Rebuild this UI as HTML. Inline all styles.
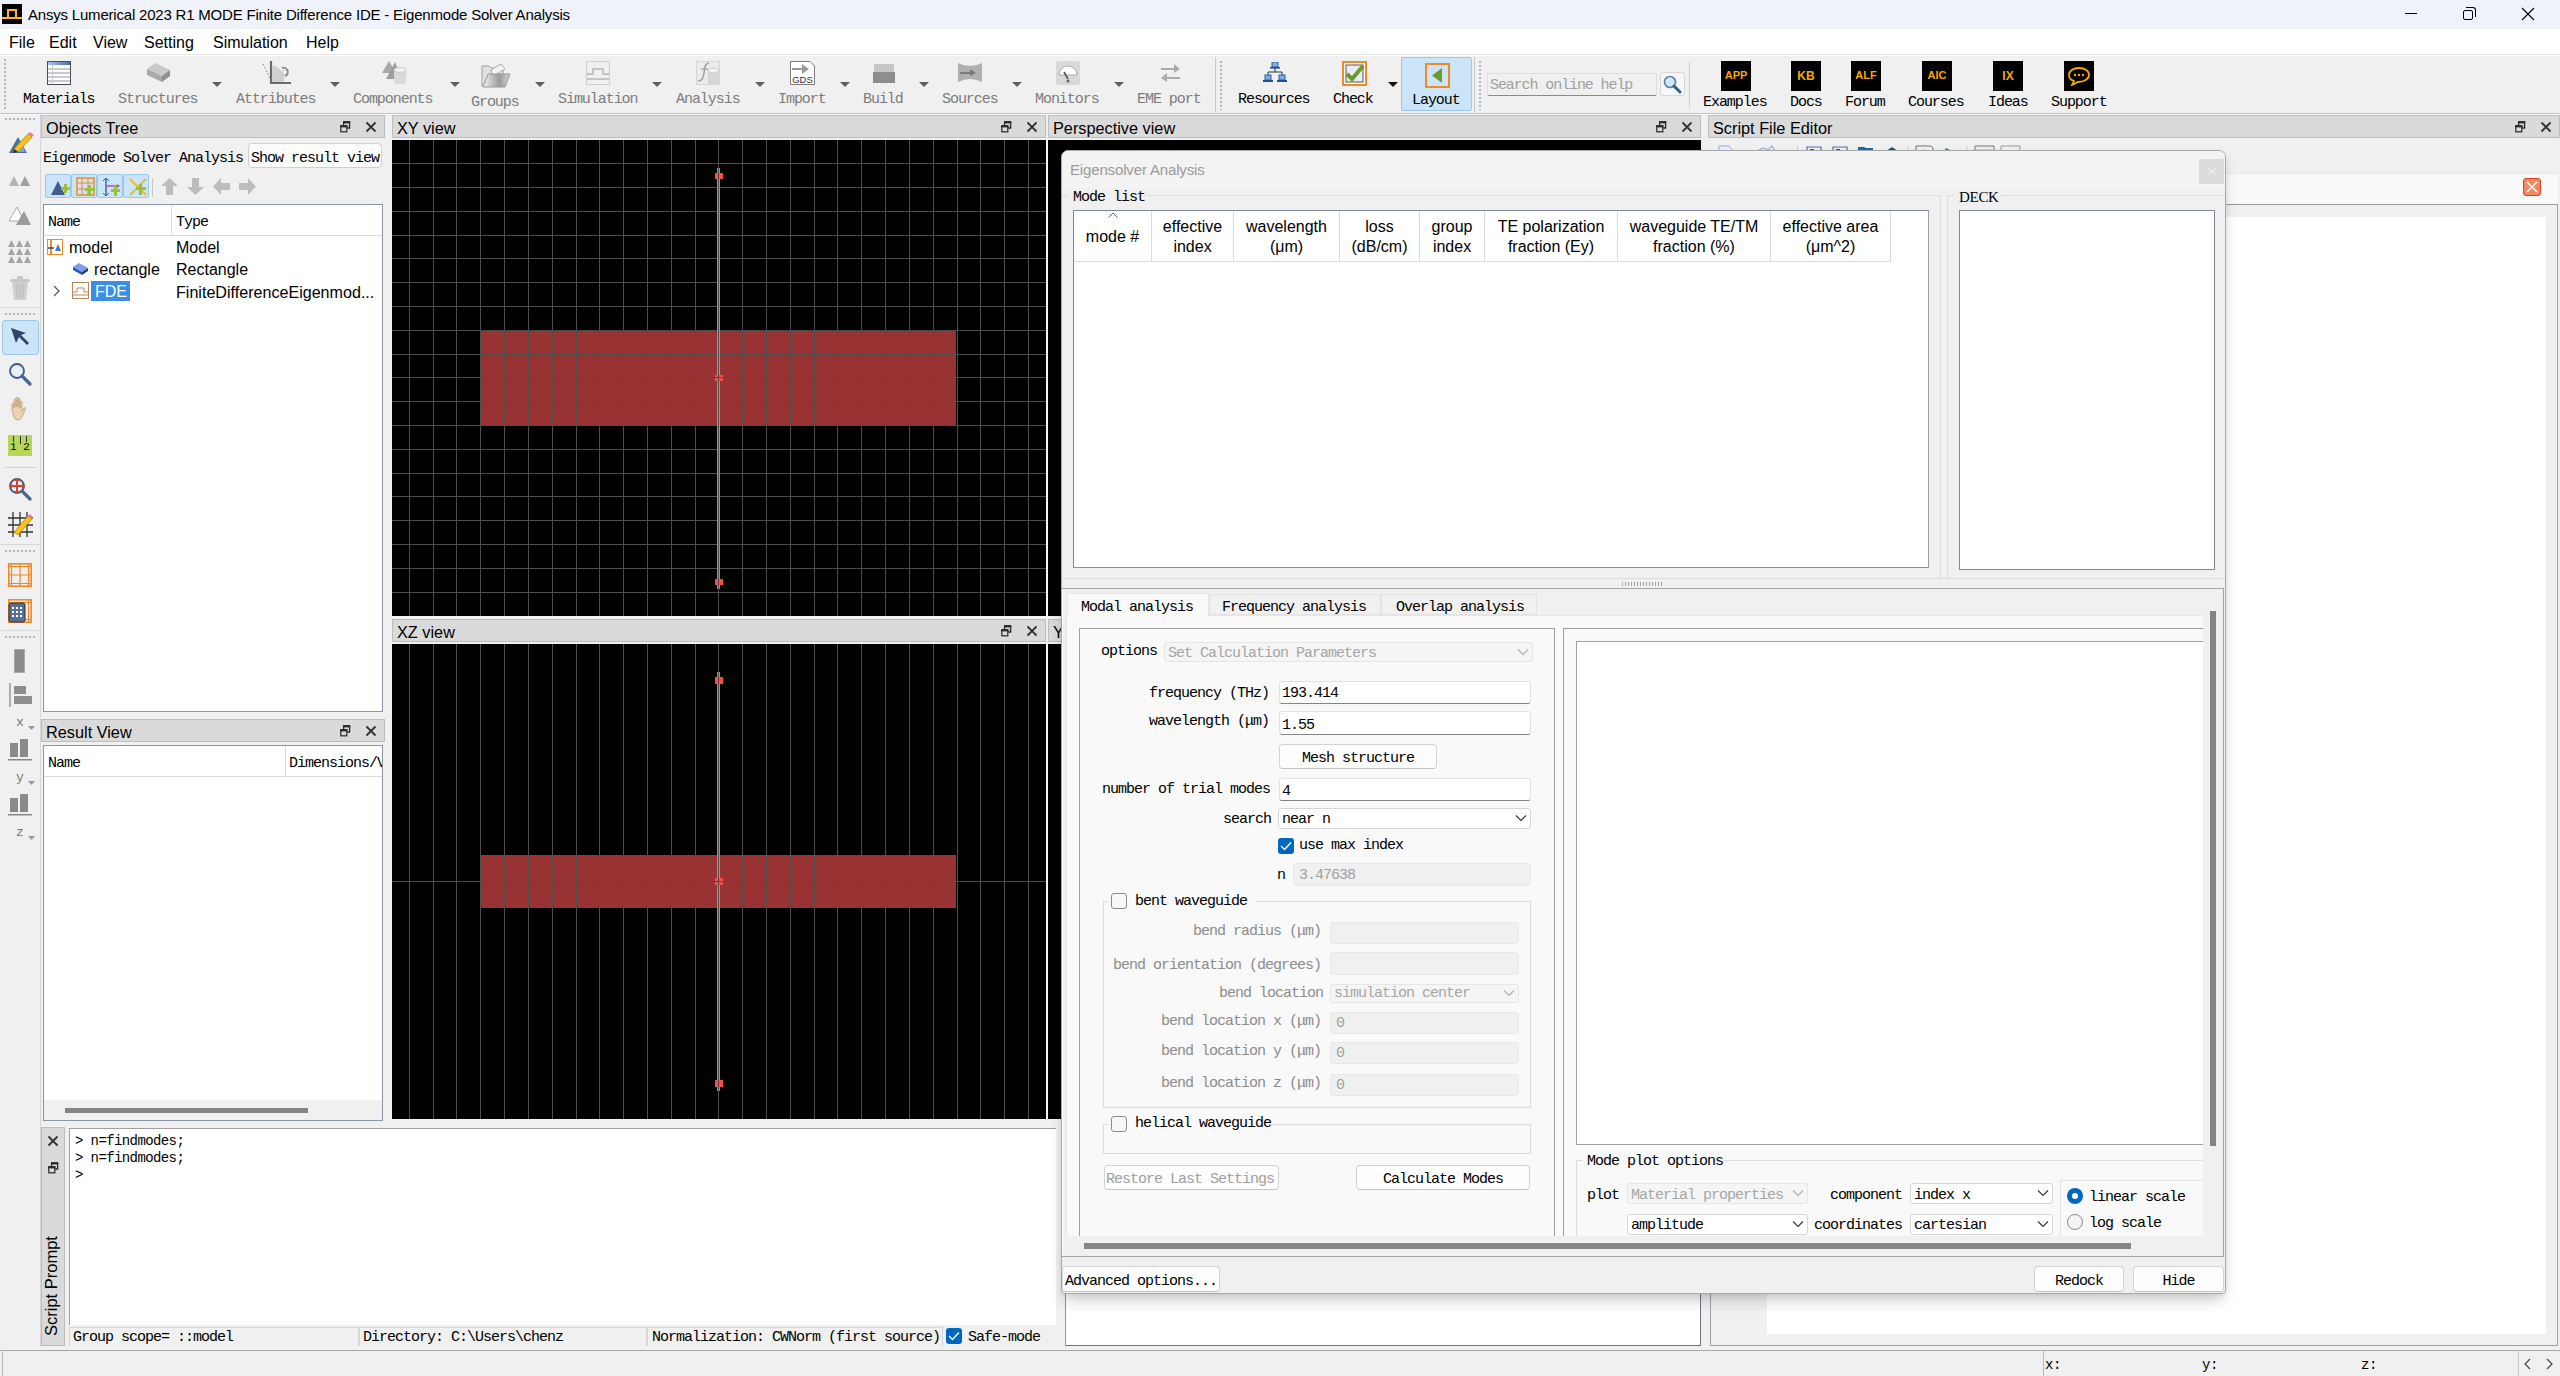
<!DOCTYPE html>
<html><head><meta charset="utf-8"><style>
*{box-sizing:border-box;margin:0;padding:0}
html,body{width:2560px;height:1376px;overflow:hidden;background:#f0f0f0;font-family:"Liberation Sans",sans-serif;color:#000}
.a{position:absolute}
.ss{font-family:"Liberation Mono",monospace;font-size:15px;letter-spacing:-1px;white-space:pre;line-height:1}
.sn{font-family:"Liberation Sans",sans-serif;white-space:pre;line-height:1}
.tbt{font-family:"Liberation Mono",monospace;font-size:15px;letter-spacing:-1.05px;white-space:pre;line-height:1;color:#7c7c7c}
.blk{color:#000}
</style></head><body>
<div class="a" style="left:0px;top:0px;width:2560px;height:29px;background:#eff3f9"></div>
<div class="a" style="left:2px;top:4px;width:20px;height:20px;background:#000"><div class="a" style="left:0;top:13px;width:20px;height:2px;background:#fbb718"></div><div class="a" style="left:5px;top:5px;width:10px;height:9px;border:2px solid #fbb718;border-bottom:none"></div></div>
<div class="a sn" style="left:28px;top:7px;font-size:15px;letter-spacing:-0.2px">Ansys Lumerical 2023 R1 MODE Finite Difference IDE - Eigenmode Solver Analysis</div>
<div class="a" style="left:2405px;top:13px;width:12px;height:1px;background:#000"></div>
<div class="a" style="left:2463px;top:10px;width:10px;height:10px;border:1px solid #000;border-radius:2px"></div>
<div class="a" style="left:2466px;top:7px;width:10px;height:10px;border-top:1px solid #000;border-right:1px solid #000;border-radius:0 3px 0 0"></div>
<svg class="a" style="left:2520px;top:6px;" width="16" height="16" viewBox="0 0 16 16"><path d="M2 2L14 14M14 2L2 14" stroke="#000" stroke-width="1.1"/></svg>
<div class="a" style="left:0px;top:29px;width:2560px;height:25px;background:#fff"></div>
<div class="a" style="left:0px;top:54px;width:2560px;height:1px;background:#e6e6e6"></div>
<div class="a" style="left:0px;top:55px;width:2560px;height:1px;background:#fff"></div>
<div class="a sn" style="left:9px;top:35px;font-size:16px">File</div>
<div class="a sn" style="left:49px;top:35px;font-size:16px">Edit</div>
<div class="a sn" style="left:93px;top:35px;font-size:16px">View</div>
<div class="a sn" style="left:144px;top:35px;font-size:16px">Setting</div>
<div class="a sn" style="left:213px;top:35px;font-size:16px">Simulation</div>
<div class="a sn" style="left:306px;top:35px;font-size:16px">Help</div>
<div class="a" style="left:0px;top:113px;width:2560px;height:1px;background:#c4c4c4"></div>
<div class="a" style="left:0px;top:114px;width:2560px;height:1px;background:#fafafa"></div>
<div class="a" style="left:4px;top:59px;width:2px;height:51px;background:repeating-linear-gradient(#b8b8b8 0 2px,transparent 2px 4px)"></div>
<div class="a" style="left:1401px;top:57px;width:71px;height:54px;background:#cce4f7;border:1px solid #99c9ef;border-radius:2px"></div>
<div class="a tbt blk" style="left:23px;top:92px;">Materials</div>
<div class="a tbt" style="left:118px;top:92px;">Structures</div>
<div class="a tbt" style="left:236px;top:92px;">Attributes</div>
<div class="a tbt" style="left:353px;top:92px;">Components</div>
<div class="a tbt" style="left:471px;top:95px;">Groups</div>
<div class="a tbt" style="left:558px;top:92px;">Simulation</div>
<div class="a tbt" style="left:676px;top:92px;">Analysis</div>
<div class="a tbt" style="left:778px;top:92px;">Import</div>
<div class="a tbt" style="left:863px;top:92px;">Build</div>
<div class="a tbt" style="left:942px;top:92px;">Sources</div>
<div class="a tbt" style="left:1035px;top:92px;">Monitors</div>
<div class="a tbt" style="left:1137px;top:92px;">EME port</div>
<div class="a tbt blk" style="left:1238px;top:92px;">Resources</div>
<div class="a tbt blk" style="left:1333px;top:92px;">Check</div>
<div class="a tbt blk" style="left:1412px;top:93px;">Layout</div>
<div class="a tbt blk" style="left:1703px;top:95px;">Examples</div>
<div class="a tbt blk" style="left:1790px;top:95px;">Docs</div>
<div class="a tbt blk" style="left:1845px;top:95px;">Forum</div>
<div class="a tbt blk" style="left:1908px;top:95px;">Courses</div>
<div class="a tbt blk" style="left:1988px;top:95px;">Ideas</div>
<div class="a tbt blk" style="left:2051px;top:95px;">Support</div>
<svg class="a" style="left:212px;top:82px;" width="10" height="6" viewBox="0 0 10 6"><path d="M0 0H10L5 5Z" fill="#5f5f5f"/></svg>
<svg class="a" style="left:330px;top:82px;" width="10" height="6" viewBox="0 0 10 6"><path d="M0 0H10L5 5Z" fill="#5f5f5f"/></svg>
<svg class="a" style="left:450px;top:82px;" width="10" height="6" viewBox="0 0 10 6"><path d="M0 0H10L5 5Z" fill="#5f5f5f"/></svg>
<svg class="a" style="left:535px;top:82px;" width="10" height="6" viewBox="0 0 10 6"><path d="M0 0H10L5 5Z" fill="#5f5f5f"/></svg>
<svg class="a" style="left:652px;top:82px;" width="10" height="6" viewBox="0 0 10 6"><path d="M0 0H10L5 5Z" fill="#5f5f5f"/></svg>
<svg class="a" style="left:755px;top:82px;" width="10" height="6" viewBox="0 0 10 6"><path d="M0 0H10L5 5Z" fill="#5f5f5f"/></svg>
<svg class="a" style="left:840px;top:82px;" width="10" height="6" viewBox="0 0 10 6"><path d="M0 0H10L5 5Z" fill="#5f5f5f"/></svg>
<svg class="a" style="left:919px;top:82px;" width="10" height="6" viewBox="0 0 10 6"><path d="M0 0H10L5 5Z" fill="#5f5f5f"/></svg>
<svg class="a" style="left:1012px;top:82px;" width="10" height="6" viewBox="0 0 10 6"><path d="M0 0H10L5 5Z" fill="#5f5f5f"/></svg>
<svg class="a" style="left:1114px;top:82px;" width="10" height="6" viewBox="0 0 10 6"><path d="M0 0H10L5 5Z" fill="#5f5f5f"/></svg>
<svg class="a" style="left:1388px;top:82px;" width="10" height="6" viewBox="0 0 10 6"><path d="M0 0H10L5 5Z" fill="#111"/></svg>
<div class="a" style="left:1215px;top:57px;width:1px;height:55px;background:#c8c8c8"></div>
<div class="a" style="left:1220px;top:61px;width:2px;height:49px;background:repeating-linear-gradient(#b8b8b8 0 2px,transparent 2px 4px)"></div>
<div class="a" style="left:1474px;top:57px;width:1px;height:55px;background:#c8c8c8"></div>
<div class="a" style="left:1479px;top:61px;width:2px;height:49px;background:repeating-linear-gradient(#b8b8b8 0 2px,transparent 2px 4px)"></div>
<div class="a" style="left:1689px;top:62px;width:1px;height:46px;background:#d0d0d0"></div>
<div class="a" style="left:1487px;top:73px;width:170px;height:23px;background:#f0f0f0;border:1px solid #dedede;border-bottom:1px solid #8a8a8a;border-radius:2px"></div>
<div class="a ss" style="left:1490px;top:78px;color:#a0a0a0;letter-spacing:-1.1px">Search online help</div>
<div class="a" style="left:1660px;top:72px;width:25px;height:24px;background:#f7f7f7;border:1px solid #d6d6d6;border-radius:3px"></div>
<svg class="a" style="left:1662px;top:74px;" width="22" height="20" viewBox="0 0 22 20"><circle cx="8" cy="8" r="5.5" fill="#cfe6fb" stroke="#5a7fa8" stroke-width="1.6"/><path d="M12 12L18 18" stroke="#3c5d86" stroke-width="3" stroke-linecap="round"/></svg>
<div class="a" style="left:47px;top:61px;width:24px;height:24px;background:#fff;border:1px solid #4d4d5a"><div class="a" style="left:0;top:0;width:22px;height:3px;background:linear-gradient(90deg,#a9c8f4,#4a6aa8)"></div><div class="a" style="left:0;top:6px;width:22px;height:2px;background:#c9c9cf"></div><div class="a" style="left:0;top:10px;width:22px;height:2px;background:#c9c9cf"></div><div class="a" style="left:0;top:14px;width:22px;height:2px;background:#c9c9cf"></div><div class="a" style="left:0;top:18px;width:22px;height:2px;background:#c9c9cf"></div><div class="a" style="left:4px;top:3px;width:1px;height:19px;background:#c9c9cf"></div></div>
<svg class="a" style="left:146px;top:61px;" width="26" height="22" viewBox="0 0 26 22"><path d="M1 8L9 2L24 9L16 15Z" fill="#c9c9c9"/><path d="M1 8L16 15L16 21L1 14Z" fill="#a9a9a9"/><path d="M16 15L24 9L24 15L16 21Z" fill="#8f8f8f"/></svg>
<svg class="a" style="left:262px;top:60px;" width="30" height="25" viewBox="0 0 30 25"><path d="M9 1V23H29" stroke="#6a6a6a" stroke-width="2.2" fill="none"/><path d="M1 4L10 22" stroke="#777" stroke-dasharray="1.5 2" stroke-width="1"/><path d="M11 20L22 10" stroke="#777" stroke-dasharray="1.5 2"/><path d="M10 6L14 6L22 13L22 22L10 22Z" fill="#d0d0d0"/><path d="M20 8a4 4 0 1 1 3 8" stroke="#888" stroke-width="2" fill="none"/></svg>
<svg class="a" style="left:382px;top:61px;" width="26" height="24" viewBox="0 0 26 24"><path d="M0 12L7 0L14 12Z" fill="#a8a8a8"/><path d="M4 18L13 1L20 18Z" fill="#9e9e9e"/><rect x="12" y="8" width="12" height="15" rx="3" fill="#dadada"/><ellipse cx="18" cy="9" rx="6" ry="2.5" fill="#f0f0f0" stroke="#ccc"/></svg>
<svg class="a" style="left:481px;top:63px;" width="30" height="26" viewBox="0 0 30 26"><path d="M1 3H8L10 5H22V23H1Z" fill="#e0e0e0" stroke="#a0a0a0"/><path d="M10 7L20 1L24 6L12 13Z" fill="#f6f6f6" stroke="#aaa"/><path d="M2 24L7 11H29L24 24Z" fill="url(#gf)" stroke="#999"/><defs><linearGradient id="gf" x1="0" x2="1"><stop offset="0" stop-color="#f4f4f4"/><stop offset="0.6" stop-color="#9a9a9a"/><stop offset="1" stop-color="#d8d8d8"/></linearGradient></defs></svg>
<svg class="a" style="left:586px;top:61px;" width="25" height="24" viewBox="0 0 25 24"><rect x="0.5" y="0.5" width="23" height="23" fill="none" stroke="#cfcfcf"/><path d="M1 13H7V8H17V13H23" stroke="#c4c4c4" stroke-width="2" fill="none"/><path d="M1 18H23" stroke="#c4c4c4" stroke-width="2"/></svg>
<svg class="a" style="left:696px;top:61px;" width="24" height="24" viewBox="0 0 24 24"><rect x="0.5" y="0.5" width="23" height="23" fill="#ebebeb" stroke="#d5d5d5"/><path d="M13 2C9 2 9 6 8 12S6 20 2 20" stroke="#a0a0a0" stroke-width="1.5" fill="none"/><path d="M5 8H12" stroke="#a0a0a0" stroke-width="1.3"/><rect x="12" y="9" width="11" height="14" fill="#d6d6d6"/><ellipse cx="17.5" cy="9.5" rx="5.5" ry="2.3" fill="#f3f3f3" stroke="#ccc"/></svg>
<svg class="a" style="left:790px;top:61px;" width="25" height="24" viewBox="0 0 25 24"><path d="M0.5 0.5H20L24.5 5V23.5H0.5Z" fill="#fff" stroke="#7b7b7b"/><path d="M2 7H12V3L19 8L12 13V9H2Z" fill="#9a9a9a"/><text x="12.5" y="21.5" text-anchor="middle" font-family="Liberation Sans" font-size="9.5" fill="#333">GDS</text></svg>
<svg class="a" style="left:873px;top:64px;" width="23" height="20" viewBox="0 0 23 20"><rect x="1" y="0" width="20" height="8" fill="#c6c6c6"/><rect x="0" y="8" width="22" height="11" fill="#8e8e8e"/></svg>
<svg class="a" style="left:958px;top:63px;" width="25" height="19" viewBox="0 0 25 19"><path d="M0 0Q12 6 24 0V19Q12 13 0 19Z" fill="#b0b0b0"/><path d="M2 9H12V6L18 10L12 13V11H2Z" fill="#7a7a7a"/></svg>
<svg class="a" style="left:1056px;top:61px;" width="24" height="24" viewBox="0 0 24 24"><rect x="0" y="0" width="24" height="24" rx="3" fill="#d8d8d8"/><path d="M3 14A9 9 0 0 1 21 14Z" fill="#fff" stroke="#aaa"/><path d="M8 11L12 18" stroke="#555" stroke-width="1.6"/><circle cx="12" cy="20" r="1.5" fill="#666"/></svg>
<svg class="a" style="left:1160px;top:63px;" width="21" height="20" viewBox="0 0 21 20"><path d="M1 5H14V1L20 6L14 10V7H1Z" fill="#ababab"/><path d="M20 14H7V10L1 15L7 19V16H20Z" fill="#ababab"/></svg>
<svg class="a" style="left:1263px;top:62px;" width="24" height="21" viewBox="0 0 24 21"><rect x="9" y="0" width="6" height="5" fill="#7ab0e6" stroke="#2a5ea8"/><rect x="7" y="5" width="10" height="1.6" fill="#1d4f9a"/><path d="M12 6V10M5 10H19M5 10V13M19 10V13" stroke="#333" stroke-width="1"/><rect x="2" y="13" width="6" height="5" fill="#7ab0e6" stroke="#2a5ea8"/><rect x="16" y="13" width="6" height="5" fill="#7ab0e6" stroke="#2a5ea8"/><rect x="0" y="18" width="10" height="2" fill="#1d4f9a"/><rect x="14" y="18" width="10" height="2" fill="#1d4f9a"/></svg>
<svg class="a" style="left:1342px;top:61px;" width="25" height="25" viewBox="0 0 25 25"><rect x="1" y="1" width="23" height="23" fill="#fff" stroke="#f08a24" stroke-width="2"/><rect x="4" y="4" width="17" height="17" fill="#e8ecf4" stroke="#555"/><path d="M5 13L10 18L21 5" stroke="#6f9a2e" stroke-width="4" fill="none"/></svg>
<svg class="a" style="left:1425px;top:63px;" width="25" height="25" viewBox="0 0 25 25"><rect x="1" y="1" width="23" height="23" fill="none" stroke="#f08a24" stroke-width="2"/><path d="M17 5V20L7 12.5Z" fill="#6f9a2e"/></svg>
<div class="a" style="left:1721px;top:61px;width:30px;height:30px;background:#000"><div class="a sn" style="left:0;top:9px;width:30px;text-align:center;font-size:11px;font-weight:bold;color:#f6a800">APP</div></div>
<div class="a" style="left:1791px;top:61px;width:30px;height:30px;background:#000"><div class="a sn" style="left:0;top:9px;width:30px;text-align:center;font-size:12px;font-weight:bold;color:#f6a800">KB</div></div>
<div class="a" style="left:1851px;top:61px;width:30px;height:30px;background:#000"><div class="a sn" style="left:0;top:9px;width:30px;text-align:center;font-size:11px;font-weight:bold;color:#f6a800">ALF</div></div>
<div class="a" style="left:1922px;top:61px;width:30px;height:30px;background:#000"><div class="a sn" style="left:0;top:9px;width:30px;text-align:center;font-size:11px;font-weight:bold;color:#f6a800">AIC</div></div>
<div class="a" style="left:1993px;top:61px;width:30px;height:30px;background:#000"><div class="a sn" style="left:0;top:9px;width:30px;text-align:center;font-size:12px;font-weight:bold;color:#f6a800">IX</div></div>
<div class="a" style="left:2064px;top:61px;width:30px;height:30px;background:#000"><svg class="a" style="left:3px;top:5px" width="24" height="20"><path d="M12 2C6 2 2 5 2 9C2 12 4 14 7 15L5 19L11 16C17 16 22 13 22 9C22 5 18 2 12 2Z" fill="none" stroke="#f6a800" stroke-width="1.8"/><circle cx="8" cy="9" r="1.2" fill="#f6a800"/><circle cx="12" cy="9" r="1.2" fill="#f6a800"/><circle cx="16" cy="9" r="1.2" fill="#f6a800"/></svg></div>
<div class="a" style="left:40px;top:114px;width:1px;height:1232px;background:#d6d6d6"></div>
<div class="a" style="left:5px;top:118px;width:32px;height:2px;background:repeating-linear-gradient(90deg,#b8b8b8 0 2px,transparent 2px 4px)"></div>
<svg class="a" style="left:8px;top:131px;" width="26" height="24" viewBox="0 0 26 24"><path d="M1 22L10 6L19 22Z" fill="#4f6e9a"/><path d="M5 21L13 9L17 21Z" fill="#86a3c8"/><path d="M6 18L20 3L24 6L10 21Z" fill="#f4c21c" stroke="#b78300" stroke-width="0.8"/><path d="M20 3L22 1L26 4L24 6Z" fill="#e87b9a"/><path d="M6 18L10 21L5 22Z" fill="#333"/></svg>
<svg class="a" style="left:9px;top:175px;" width="22" height="11" viewBox="0 0 22 11"><path d="M0 11L5 1L10 11Z" fill="#b3b3b3"/><path d="M11 11L16 1L21 11Z" fill="#a0a0a0"/></svg>
<svg class="a" style="left:8px;top:206px;" width="24" height="20" viewBox="0 0 24 20"><path d="M1 15L9 1L16 15Z" fill="#fff" stroke="#aaa"/><path d="M8 19L16 5L23 19Z" fill="#9a9a9a"/></svg>
<svg class="a" style="left:8px;top:240px;" width="24" height="24" viewBox="0 0 24 24"><g fill="#a5a5a5"><path d="M0 7L3.5 0L7 7Z"/><path d="M8 7L11.5 0L15 7Z"/><path d="M16 7L19.5 0L23 7Z"/><path d="M0 15L3.5 8L7 15Z"/><path d="M8 15L11.5 8L15 15Z"/><path d="M16 15L19.5 8L23 15Z"/><path d="M0 23L3.5 16L7 23Z"/><path d="M8 23L11.5 16L15 23Z"/><path d="M16 23L19.5 16L23 23Z"/></g></svg>
<svg class="a" style="left:9px;top:276px;" width="22" height="25" viewBox="0 0 22 25"><rect x="1" y="3" width="20" height="3" rx="1.5" fill="#c8c8c8"/><rect x="8" y="0" width="6" height="3" fill="#c8c8c8"/><path d="M3 6H19L17 24H5Z" fill="#cfcfcf"/><path d="M8 8V22M11 8V22M14 8V22" stroke="#b8b8b8"/></svg>
<div class="a" style="left:0px;top:307px;width:40px;height:1px;background:#d8d8d8"></div>
<div class="a" style="left:5px;top:313px;width:32px;height:2px;background:repeating-linear-gradient(90deg,#b8b8b8 0 2px,transparent 2px 4px)"></div>
<div class="a" style="left:2px;top:320px;width:37px;height:35px;background:#cce4f7;border:1px solid #99c9ef;border-radius:3px"></div>
<svg class="a" style="left:10px;top:327px;" width="20" height="20" viewBox="0 0 20 20"><path d="M1 1L6 16L9 10L17 18L19 16L11 8L16 6Z" fill="#2d4668"/></svg>
<svg class="a" style="left:8px;top:362px;" width="24" height="24" viewBox="0 0 24 24"><circle cx="9" cy="9" r="7" fill="#e6eef8" stroke="#3f5a80" stroke-width="1.8"/><path d="M14 14L22 22" stroke="#4a6990" stroke-width="3.2" stroke-linecap="round"/></svg>
<svg class="a" style="left:10px;top:397px;" width="20" height="24" viewBox="0 0 20 24"><path d="M5 22C3 18 2 14 2 11V7C2 6 4 6 4 7V11V3C4 2 6 2 6 3V10V1C6 0 8 0 8 1V10V2C8 1 10 1 10 2V11V5C10 4 12 4 12 5V14L14 11C15 10 16 11 15.5 12L12 20C11 22 10 23 8 23Z" fill="#e9d2b2" stroke="#bba07e" stroke-width="0.8"/></svg>
<div class="a" style="left:8px;top:435px;width:24px;height:21px;background:#b7d65c"><div class="a ss" style="left:2px;top:7px;font-size:11px;letter-spacing:0">1 2</div><div class="a" style="left:5px;top:1px;width:1px;height:6px;background:#333"></div><div class="a" style="left:12px;top:1px;width:1px;height:8px;background:#333"></div><div class="a" style="left:18px;top:1px;width:1px;height:6px;background:#333"></div></div>
<div class="a" style="left:5px;top:467px;width:31px;height:1px;background:#d0d0d0"></div>
<svg class="a" style="left:8px;top:477px;" width="24" height="24" viewBox="0 0 24 24"><circle cx="9" cy="9" r="7" fill="#e6eef8" stroke="#3f5a80" stroke-width="1.8"/><path d="M14 14L22 22" stroke="#4a6990" stroke-width="3.2" stroke-linecap="round"/><path d="M9 2V16M2 9H16" stroke="#d9452b" stroke-width="2"/><path d="M6 4L9 1L12 4M6 14L9 17L12 14M4 6L1 9L4 12M14 6L17 9L14 12" fill="#d9452b"/></svg>
<svg class="a" style="left:8px;top:512px;" width="25" height="25" viewBox="0 0 25 25"><path d="M5 0V25M12 0V25M19 0V25M0 6H25M0 13H25M0 20H25" stroke="#333" stroke-width="1.3"/><path d="M6 20L20 4L24 7L10 23Z" fill="#f4c21c" stroke="#b78300" stroke-width="0.8"/><path d="M20 4L22 2L25 5L24 7Z" fill="#e87b9a"/></svg>
<div class="a" style="left:0px;top:544px;width:40px;height:1px;background:#d8d8d8"></div>
<div class="a" style="left:5px;top:550px;width:32px;height:2px;background:repeating-linear-gradient(90deg,#b8b8b8 0 2px,transparent 2px 4px)"></div>
<svg class="a" style="left:8px;top:563px;" width="24" height="24" viewBox="0 0 24 24"><rect x="0.8" y="0.8" width="22.4" height="22.4" fill="none" stroke="#f08a24" stroke-width="1.6"/><path d="M0 3.5H24M3.5 0V24M12 0V24M0 12H24M20.5 0V24M0 20.5H24" stroke="#f08a24" stroke-width="1.2"/></svg>
<svg class="a" style="left:8px;top:599px;" width="24" height="24" viewBox="0 0 24 24"><rect x="0.8" y="0.8" width="22.4" height="22.4" fill="none" stroke="#f08a24" stroke-width="1.6"/><path d="M0 3.5H24M20.5 0V24M0 20.5H24" stroke="#f08a24" stroke-width="1.2"/><rect x="1" y="4" width="16" height="19" rx="2" fill="#5a6f95" stroke="#333"/><g fill="#fff"><rect x="4" y="8" width="2" height="2"/><rect x="8" y="8" width="2" height="2"/><rect x="12" y="8" width="2" height="2"/><rect x="4" y="12" width="2" height="2"/><rect x="8" y="12" width="2" height="2"/><rect x="12" y="12" width="2" height="2"/><rect x="4" y="16" width="2" height="2"/><rect x="8" y="16" width="2" height="2"/><rect x="12" y="16" width="2" height="2"/></g></svg>
<div class="a" style="left:0px;top:630px;width:40px;height:1px;background:#d8d8d8"></div>
<div class="a" style="left:5px;top:636px;width:32px;height:2px;background:repeating-linear-gradient(90deg,#b8b8b8 0 2px,transparent 2px 4px)"></div>
<div class="a" style="left:14px;top:649px;width:11px;height:24px;background:#8a8a8a;border:1px solid #aaa"></div>
<svg class="a" style="left:9px;top:683px;" width="23" height="24" viewBox="0 0 23 24"><path d="M1 0V24" stroke="#999" stroke-width="1.5"/><rect x="5" y="3" width="12" height="8" fill="#8e8e8e"/><rect x="5" y="13" width="18" height="8" fill="#8e8e8e"/></svg>
<div class="a ss" style="left:16px;top:716px;font-size:13px;color:#777;letter-spacing:0">x</div>
<svg class="a" style="left:28px;top:726px;" width="7" height="4" viewBox="0 0 7 4"><path d="M0 0H7L3.5 4Z" fill="#999"/></svg>
<div class="a ss" style="left:16px;top:771px;font-size:13px;color:#777;letter-spacing:0">y</div>
<svg class="a" style="left:28px;top:781px;" width="7" height="4" viewBox="0 0 7 4"><path d="M0 0H7L3.5 4Z" fill="#999"/></svg>
<div class="a ss" style="left:16px;top:826px;font-size:13px;color:#777;letter-spacing:0">z</div>
<svg class="a" style="left:28px;top:836px;" width="7" height="4" viewBox="0 0 7 4"><path d="M0 0H7L3.5 4Z" fill="#999"/></svg>
<svg class="a" style="left:8px;top:739px;" width="24" height="22" viewBox="0 0 24 22"><rect x="2" y="4" width="8" height="14" fill="#8a8a8a"/><rect x="12" y="0" width="8" height="18" fill="#8a8a8a"/><rect x="0" y="20" width="24" height="1.5" fill="#888"/></svg>
<svg class="a" style="left:8px;top:794px;" width="24" height="22" viewBox="0 0 24 22"><rect x="2" y="4" width="8" height="14" fill="#8a8a8a"/><rect x="12" y="0" width="8" height="18" fill="#8a8a8a"/><rect x="0" y="20" width="24" height="1.5" fill="#888"/></svg>
<div class="a" style="left:41px;top:115px;width:344px;height:23px;background:#dadada;border:1px solid #bdbdbd"></div>
<div class="a sn" style="left:46px;top:120px;font-size:16.3px">Objects Tree</div>
<svg class="a" style="left:339px;top:121px;" width="12" height="12" viewBox="0 0 12 12"><path d="M4.6 4V0.8H10.6V7H8.2" fill="none" stroke="#2a2a2a" stroke-width="1.3"/><rect x="4" y="0.2" width="7.2" height="2.2" fill="#2a2a2a"/><rect x="1.8" y="4.8" width="6" height="6" fill="none" stroke="#333" stroke-width="1.3"/><rect x="1.2" y="4.2" width="7.2" height="2.2" fill="#2a2a2a"/></svg>
<svg class="a" style="left:365px;top:121px;" width="12" height="12" viewBox="0 0 12 12"><path d="M1.5 1.5L10.5 10.5M10.5 1.5L1.5 10.5" stroke="#333" stroke-width="1.8"/></svg>
<div class="a ss" style="left:43px;top:151px;">Eigenmode Solver Analysis</div>
<div class="a" style="left:248px;top:143px;width:134px;height:25px;background:#fdfdfd;border:1px solid #d0d0d0;border-radius:4px"></div>
<div class="a ss" style="left:251px;top:151px;">Show result view</div>
<div class="a" style="left:45px;top:174px;width:26px;height:24px;background:#cce4f7;border:1px solid #99c9ef;border-radius:2px"></div>
<div class="a" style="left:71px;top:174px;width:26px;height:24px;background:#cce4f7;border:1px solid #99c9ef;border-radius:2px"></div>
<div class="a" style="left:97px;top:174px;width:26px;height:24px;background:#cce4f7;border:1px solid #99c9ef;border-radius:2px"></div>
<div class="a" style="left:123px;top:174px;width:26px;height:24px;background:#cce4f7;border:1px solid #99c9ef;border-radius:2px"></div>
<svg class="a" style="left:50px;top:178px;" width="20" height="18" viewBox="0 0 20 18"><path d="M1 17L8 3L15 17Z" fill="#3f5e8e"/><path d="M11 9H14V6H17V9H20V12H17V15H14V12H11Z" fill="#9bbf3a"/></svg>
<svg class="a" style="left:76px;top:177px;" width="20" height="20" viewBox="0 0 20 20"><rect x="1" y="1" width="17" height="17" fill="none" stroke="#f08a24" stroke-width="1.5"/><path d="M1 6H18M1 12H18M6 1V18M12 1V18" stroke="#f08a24"/><path d="M9 11H12V8H15V11H19V14H15V19H12V14H9Z" fill="#9bbf3a"/></svg>
<svg class="a" style="left:102px;top:177px;" width="20" height="20" viewBox="0 0 20 20"><path d="M4 1V19" stroke="#3f5e8e" stroke-width="1.4"/><path d="M1 4L4 1L7 4M1 16L4 19L7 16" fill="none" stroke="#3f5e8e"/><path d="M5 9H17" stroke="#c040e0" stroke-width="1.5"/><path d="M15 7L18 9L15 11Z" fill="#c040e0"/><path d="M9 12H12V9H15V12H18V15H15V19H12V15H9Z" fill="#9bbf3a"/></svg>
<svg class="a" style="left:128px;top:177px;" width="20" height="20" viewBox="0 0 20 20"><path d="M2 2L18 18M18 2L2 18" stroke="#e8c020" stroke-width="1.8"/><path d="M8 10H11V7H14V10H18V13H14V18H11V13H8Z" fill="#9bbf3a"/></svg>
<div class="a" style="left:152px;top:178px;width:1px;height:19px;background:#c8c8c8"></div>
<svg class="a" style="left:161px;top:178px;" width="17" height="17" viewBox="0 0 17 17"><path d="M8.5 0L17 8H12V17H5V8H0Z" fill="#bdbdbd"/></svg>
<svg class="a" style="left:187px;top:178px;" width="17" height="17" viewBox="0 0 17 17"><path d="M8.5 17L17 9H12V0H5V9H0Z" fill="#bdbdbd"/></svg>
<svg class="a" style="left:213px;top:178px;" width="17" height="17" viewBox="0 0 17 17"><path d="M0 8.5L8 0V5H17V12H8V17Z" fill="#bdbdbd"/></svg>
<svg class="a" style="left:239px;top:178px;" width="17" height="17" viewBox="0 0 17 17"><path d="M17 8.5L9 0V5H0V12H9V17Z" fill="#bdbdbd"/></svg>
<div class="a" style="left:43px;top:204px;width:340px;height:508px;background:#fff;border:1px solid #8a95a5"></div>
<div class="a" style="left:44px;top:235px;width:338px;height:1px;background:#d9d9d9"></div>
<div class="a" style="left:171px;top:205px;width:1px;height:30px;background:#dcdcdc"></div>
<div class="a ss" style="left:48px;top:215px;">Name</div>
<div class="a ss" style="left:176px;top:215px;">Type</div>
<div class="a sn" style="left:69px;top:240px;font-size:16px">model</div>
<div class="a sn" style="left:176px;top:240px;font-size:16px">Model</div>
<div class="a sn" style="left:94px;top:262px;font-size:16px">rectangle</div>
<div class="a sn" style="left:176px;top:262px;font-size:16px">Rectangle</div>
<div class="a" style="left:91px;top:281px;width:39px;height:20px;background:#3a8ee6"></div>
<div class="a sn" style="left:95px;top:284px;font-size:16px;color:#fff">FDE</div>
<div class="a sn" style="left:176px;top:284px;font-size:16.1px">FiniteDifferenceEigenmod...</div>
<svg class="a" style="left:47px;top:239px;" width="17" height="17" viewBox="0 0 17 17"><rect x="0.5" y="0.5" width="15" height="15" fill="#fff" stroke="#f08a24"/><path d="M4 0V16" stroke="#f08a24" stroke-width="2"/><path d="M1 9H7" stroke="#2b4a80" stroke-width="1.5"/><path d="M8 12L11 5L14 12Z" fill="#4f78b8"/></svg>
<svg class="a" style="left:72px;top:262px;" width="17" height="14" viewBox="0 0 17 14"><path d="M1 5L7 1L16 6L10 10Z" fill="#7aa0e8"/><path d="M1 5L10 10V13L1 8Z" fill="#2b53a8"/><path d="M10 10L16 6V9L10 13Z" fill="#1c3c80"/></svg>
<svg class="a" style="left:52px;top:285px;" width="9" height="12" viewBox="0 0 9 12"><path d="M2 1L7 6L2 11" fill="none" stroke="#555" stroke-width="1.2"/></svg>
<svg class="a" style="left:72px;top:282px;" width="17" height="17" viewBox="0 0 17 17"><rect x="0.5" y="0.5" width="16" height="16" fill="none" stroke="#b8865a"/><path d="M1 10H5V6H12V10H16M1 13H16" stroke="#b8865a" fill="none"/></svg>
<div class="a" style="left:41px;top:719px;width:344px;height:23px;background:#dadada;border:1px solid #bdbdbd"></div>
<div class="a sn" style="left:46px;top:724px;font-size:16.3px">Result View</div>
<svg class="a" style="left:339px;top:725px;" width="12" height="12" viewBox="0 0 12 12"><path d="M4.6 4V0.8H10.6V7H8.2" fill="none" stroke="#2a2a2a" stroke-width="1.3"/><rect x="4" y="0.2" width="7.2" height="2.2" fill="#2a2a2a"/><rect x="1.8" y="4.8" width="6" height="6" fill="none" stroke="#333" stroke-width="1.3"/><rect x="1.2" y="4.2" width="7.2" height="2.2" fill="#2a2a2a"/></svg>
<svg class="a" style="left:365px;top:725px;" width="12" height="12" viewBox="0 0 12 12"><path d="M1.5 1.5L10.5 10.5M10.5 1.5L1.5 10.5" stroke="#333" stroke-width="1.8"/></svg>
<div class="a" style="left:43px;top:745px;width:340px;height:376px;background:#fff;border:1px solid #8a95a5"></div>
<div class="a" style="left:44px;top:776px;width:338px;height:1px;background:#d9d9d9"></div>
<div class="a" style="left:285px;top:746px;width:1px;height:30px;background:#dcdcdc"></div>
<div class="a ss" style="left:48px;top:756px;">Name</div>
<div class="a" style="left:286px;top:746px;width:96px;height:29px;overflow:hidden"><div class="a ss" style="left:3px;top:10px">Dimensions/V</div></div>
<div class="a" style="left:44px;top:1100px;width:338px;height:20px;background:#f0f0f0"></div>
<div class="a" style="left:65px;top:1108px;width:243px;height:5px;background:#858585"></div>
<div class="a" style="left:392px;top:115px;width:654px;height:23px;background:#dadada;border:1px solid #bdbdbd"></div>
<div class="a sn" style="left:397px;top:120px;font-size:16.3px">XY view</div>
<svg class="a" style="left:1000px;top:121px;" width="12" height="12" viewBox="0 0 12 12"><path d="M4.6 4V0.8H10.6V7H8.2" fill="none" stroke="#2a2a2a" stroke-width="1.3"/><rect x="4" y="0.2" width="7.2" height="2.2" fill="#2a2a2a"/><rect x="1.8" y="4.8" width="6" height="6" fill="none" stroke="#333" stroke-width="1.3"/><rect x="1.2" y="4.2" width="7.2" height="2.2" fill="#2a2a2a"/></svg>
<svg class="a" style="left:1026px;top:121px;" width="12" height="12" viewBox="0 0 12 12"><path d="M1.5 1.5L10.5 10.5M10.5 1.5L1.5 10.5" stroke="#333" stroke-width="1.8"/></svg>
<div class="a" style="left:392px;top:140px;width:654px;height:476px;background:#000"></div>
<div class="a" style="left:480px;top:330px;width:476px;height:96px;background:#993333"></div>
<div class="a" style="left:409px;top:140px;width:1px;height:476px;background:#4d4d4d"></div>
<div class="a" style="left:433px;top:140px;width:1px;height:476px;background:#4d4d4d"></div>
<div class="a" style="left:456px;top:140px;width:1px;height:476px;background:#4d4d4d"></div>
<div class="a" style="left:480px;top:140px;width:1px;height:476px;background:#4d4d4d"></div>
<div class="a" style="left:504px;top:140px;width:1px;height:476px;background:#4d4d4d"></div>
<div class="a" style="left:528px;top:140px;width:1px;height:476px;background:#4d4d4d"></div>
<div class="a" style="left:552px;top:140px;width:1px;height:476px;background:#4d4d4d"></div>
<div class="a" style="left:576px;top:140px;width:1px;height:476px;background:#4d4d4d"></div>
<div class="a" style="left:599px;top:140px;width:1px;height:476px;background:#4d4d4d"></div>
<div class="a" style="left:623px;top:140px;width:1px;height:476px;background:#4d4d4d"></div>
<div class="a" style="left:647px;top:140px;width:1px;height:476px;background:#4d4d4d"></div>
<div class="a" style="left:671px;top:140px;width:1px;height:476px;background:#4d4d4d"></div>
<div class="a" style="left:695px;top:140px;width:1px;height:476px;background:#4d4d4d"></div>
<div class="a" style="left:718px;top:140px;width:1px;height:476px;background:#4d4d4d"></div>
<div class="a" style="left:742px;top:140px;width:1px;height:476px;background:#4d4d4d"></div>
<div class="a" style="left:766px;top:140px;width:1px;height:476px;background:#4d4d4d"></div>
<div class="a" style="left:790px;top:140px;width:1px;height:476px;background:#4d4d4d"></div>
<div class="a" style="left:814px;top:140px;width:1px;height:476px;background:#4d4d4d"></div>
<div class="a" style="left:837px;top:140px;width:1px;height:476px;background:#4d4d4d"></div>
<div class="a" style="left:861px;top:140px;width:1px;height:476px;background:#4d4d4d"></div>
<div class="a" style="left:885px;top:140px;width:1px;height:476px;background:#4d4d4d"></div>
<div class="a" style="left:909px;top:140px;width:1px;height:476px;background:#4d4d4d"></div>
<div class="a" style="left:933px;top:140px;width:1px;height:476px;background:#4d4d4d"></div>
<div class="a" style="left:957px;top:140px;width:1px;height:476px;background:#4d4d4d"></div>
<div class="a" style="left:980px;top:140px;width:1px;height:476px;background:#4d4d4d"></div>
<div class="a" style="left:1004px;top:140px;width:1px;height:476px;background:#4d4d4d"></div>
<div class="a" style="left:1028px;top:140px;width:1px;height:476px;background:#4d4d4d"></div>
<div class="a" style="left:392px;top:163px;width:654px;height:1px;background:#4d4d4d"></div>
<div class="a" style="left:392px;top:187px;width:654px;height:1px;background:#4d4d4d"></div>
<div class="a" style="left:392px;top:211px;width:654px;height:1px;background:#4d4d4d"></div>
<div class="a" style="left:392px;top:235px;width:654px;height:1px;background:#4d4d4d"></div>
<div class="a" style="left:392px;top:258px;width:654px;height:1px;background:#4d4d4d"></div>
<div class="a" style="left:392px;top:282px;width:654px;height:1px;background:#4d4d4d"></div>
<div class="a" style="left:392px;top:306px;width:654px;height:1px;background:#4d4d4d"></div>
<div class="a" style="left:392px;top:330px;width:654px;height:1px;background:#4d4d4d"></div>
<div class="a" style="left:392px;top:354px;width:654px;height:1px;background:#4d4d4d"></div>
<div class="a" style="left:392px;top:377px;width:654px;height:1px;background:#4d4d4d"></div>
<div class="a" style="left:392px;top:401px;width:654px;height:1px;background:#4d4d4d"></div>
<div class="a" style="left:392px;top:425px;width:654px;height:1px;background:#4d4d4d"></div>
<div class="a" style="left:392px;top:449px;width:654px;height:1px;background:#4d4d4d"></div>
<div class="a" style="left:392px;top:473px;width:654px;height:1px;background:#4d4d4d"></div>
<div class="a" style="left:392px;top:496px;width:654px;height:1px;background:#4d4d4d"></div>
<div class="a" style="left:392px;top:520px;width:654px;height:1px;background:#4d4d4d"></div>
<div class="a" style="left:392px;top:544px;width:654px;height:1px;background:#4d4d4d"></div>
<div class="a" style="left:392px;top:568px;width:654px;height:1px;background:#4d4d4d"></div>
<div class="a" style="left:392px;top:592px;width:654px;height:1px;background:#4d4d4d"></div>
<div class="a" style="left:717px;top:168px;width:1px;height:421px;background:#ff8000"></div>
<div class="a" style="left:719px;top:168px;width:1px;height:421px;background:#ff8000"></div>
<div class="a" style="left:715px;top:173px;width:8px;height:6px;background:#ff4a4a"></div>
<div class="a" style="left:718px;top:173px;width:1px;height:6px;background:#4d4d4d"></div>
<div class="a" style="left:715px;top:375px;width:8px;height:6px;background:#ff4a4a"></div>
<div class="a" style="left:718px;top:375px;width:1px;height:6px;background:#4d4d4d"></div>
<div class="a" style="left:715px;top:579px;width:8px;height:6px;background:#ff4a4a"></div>
<div class="a" style="left:718px;top:579px;width:1px;height:6px;background:#4d4d4d"></div>
<div class="a" style="left:715px;top:377px;width:8px;height:1px;background:#4d4d4d"></div>
<div class="a" style="left:392px;top:616px;width:654px;height:2px;background:#f4f4f4"></div>
<div class="a" style="left:1046px;top:140px;width:2px;height:476px;background:#f4f4f4"></div>
<div class="a" style="left:392px;top:619px;width:654px;height:23px;background:#dadada;border:1px solid #bdbdbd"></div>
<div class="a sn" style="left:397px;top:624px;font-size:16.3px">XZ view</div>
<svg class="a" style="left:1000px;top:625px;" width="12" height="12" viewBox="0 0 12 12"><path d="M4.6 4V0.8H10.6V7H8.2" fill="none" stroke="#2a2a2a" stroke-width="1.3"/><rect x="4" y="0.2" width="7.2" height="2.2" fill="#2a2a2a"/><rect x="1.8" y="4.8" width="6" height="6" fill="none" stroke="#333" stroke-width="1.3"/><rect x="1.2" y="4.2" width="7.2" height="2.2" fill="#2a2a2a"/></svg>
<svg class="a" style="left:1026px;top:625px;" width="12" height="12" viewBox="0 0 12 12"><path d="M1.5 1.5L10.5 10.5M10.5 1.5L1.5 10.5" stroke="#333" stroke-width="1.8"/></svg>
<div class="a" style="left:392px;top:644px;width:654px;height:475px;background:#000"></div>
<div class="a" style="left:480px;top:855px;width:476px;height:53px;background:#993333"></div>
<div class="a" style="left:409px;top:644px;width:1px;height:475px;background:#4d4d4d"></div>
<div class="a" style="left:433px;top:644px;width:1px;height:475px;background:#4d4d4d"></div>
<div class="a" style="left:456px;top:644px;width:1px;height:475px;background:#4d4d4d"></div>
<div class="a" style="left:480px;top:644px;width:1px;height:475px;background:#4d4d4d"></div>
<div class="a" style="left:504px;top:644px;width:1px;height:475px;background:#4d4d4d"></div>
<div class="a" style="left:528px;top:644px;width:1px;height:475px;background:#4d4d4d"></div>
<div class="a" style="left:552px;top:644px;width:1px;height:475px;background:#4d4d4d"></div>
<div class="a" style="left:576px;top:644px;width:1px;height:475px;background:#4d4d4d"></div>
<div class="a" style="left:599px;top:644px;width:1px;height:475px;background:#4d4d4d"></div>
<div class="a" style="left:623px;top:644px;width:1px;height:475px;background:#4d4d4d"></div>
<div class="a" style="left:647px;top:644px;width:1px;height:475px;background:#4d4d4d"></div>
<div class="a" style="left:671px;top:644px;width:1px;height:475px;background:#4d4d4d"></div>
<div class="a" style="left:695px;top:644px;width:1px;height:475px;background:#4d4d4d"></div>
<div class="a" style="left:718px;top:644px;width:1px;height:475px;background:#4d4d4d"></div>
<div class="a" style="left:742px;top:644px;width:1px;height:475px;background:#4d4d4d"></div>
<div class="a" style="left:766px;top:644px;width:1px;height:475px;background:#4d4d4d"></div>
<div class="a" style="left:790px;top:644px;width:1px;height:475px;background:#4d4d4d"></div>
<div class="a" style="left:814px;top:644px;width:1px;height:475px;background:#4d4d4d"></div>
<div class="a" style="left:837px;top:644px;width:1px;height:475px;background:#4d4d4d"></div>
<div class="a" style="left:861px;top:644px;width:1px;height:475px;background:#4d4d4d"></div>
<div class="a" style="left:885px;top:644px;width:1px;height:475px;background:#4d4d4d"></div>
<div class="a" style="left:909px;top:644px;width:1px;height:475px;background:#4d4d4d"></div>
<div class="a" style="left:933px;top:644px;width:1px;height:475px;background:#4d4d4d"></div>
<div class="a" style="left:957px;top:644px;width:1px;height:475px;background:#4d4d4d"></div>
<div class="a" style="left:980px;top:644px;width:1px;height:475px;background:#4d4d4d"></div>
<div class="a" style="left:1004px;top:644px;width:1px;height:475px;background:#4d4d4d"></div>
<div class="a" style="left:1028px;top:644px;width:1px;height:475px;background:#4d4d4d"></div>
<div class="a" style="left:392px;top:881px;width:654px;height:1px;background:#4d4d4d"></div>
<div class="a" style="left:717px;top:672px;width:1px;height:419px;background:#ff8000"></div>
<div class="a" style="left:719px;top:672px;width:1px;height:419px;background:#ff8000"></div>
<div class="a" style="left:715px;top:677px;width:8px;height:7px;background:#ff4a4a"></div>
<div class="a" style="left:718px;top:677px;width:1px;height:7px;background:#4d4d4d"></div>
<div class="a" style="left:715px;top:878px;width:8px;height:7px;background:#ff4a4a"></div>
<div class="a" style="left:718px;top:878px;width:1px;height:7px;background:#4d4d4d"></div>
<div class="a" style="left:715px;top:1080px;width:8px;height:7px;background:#ff4a4a"></div>
<div class="a" style="left:718px;top:1080px;width:1px;height:7px;background:#4d4d4d"></div>
<div class="a" style="left:715px;top:881px;width:8px;height:1px;background:#4d4d4d"></div>
<div class="a" style="left:1046px;top:644px;width:2px;height:475px;background:#f4f4f4"></div>
<div class="a" style="left:1048px;top:115px;width:653px;height:23px;background:#dadada;border:1px solid #bdbdbd"></div>
<div class="a sn" style="left:1053px;top:120px;font-size:16.3px">Perspective view</div>
<svg class="a" style="left:1655px;top:121px;" width="12" height="12" viewBox="0 0 12 12"><path d="M4.6 4V0.8H10.6V7H8.2" fill="none" stroke="#2a2a2a" stroke-width="1.3"/><rect x="4" y="0.2" width="7.2" height="2.2" fill="#2a2a2a"/><rect x="1.8" y="4.8" width="6" height="6" fill="none" stroke="#333" stroke-width="1.3"/><rect x="1.2" y="4.2" width="7.2" height="2.2" fill="#2a2a2a"/></svg>
<svg class="a" style="left:1681px;top:121px;" width="12" height="12" viewBox="0 0 12 12"><path d="M1.5 1.5L10.5 10.5M10.5 1.5L1.5 10.5" stroke="#333" stroke-width="1.8"/></svg>
<div class="a" style="left:1048px;top:140px;width:653px;height:476px;background:#000"></div>
<div class="a" style="left:1048px;top:619px;width:653px;height:23px;background:#dadada;border:1px solid #bdbdbd"></div>
<div class="a sn" style="left:1053px;top:624px;font-size:16.3px">YZ view</div>
<svg class="a" style="left:1655px;top:625px;" width="12" height="12" viewBox="0 0 12 12"><path d="M4.6 4V0.8H10.6V7H8.2" fill="none" stroke="#2a2a2a" stroke-width="1.3"/><rect x="4" y="0.2" width="7.2" height="2.2" fill="#2a2a2a"/><rect x="1.8" y="4.8" width="6" height="6" fill="none" stroke="#333" stroke-width="1.3"/><rect x="1.2" y="4.2" width="7.2" height="2.2" fill="#2a2a2a"/></svg>
<svg class="a" style="left:1681px;top:625px;" width="12" height="12" viewBox="0 0 12 12"><path d="M1.5 1.5L10.5 10.5M10.5 1.5L1.5 10.5" stroke="#333" stroke-width="1.8"/></svg>
<div class="a" style="left:1048px;top:644px;width:653px;height:475px;background:#000"></div>
<div class="a" style="left:1065px;top:1120px;width:636px;height:226px;background:#fff;border:1px solid #6f7585;border-top:none;border-left:1px solid #8a95a5"></div>
<div class="a" style="left:1708px;top:115px;width:852px;height:23px;background:#dadada;border:1px solid #bdbdbd"></div>
<div class="a sn" style="left:1713px;top:120px;font-size:16.3px">Script File Editor</div>
<svg class="a" style="left:2514px;top:121px;" width="12" height="12" viewBox="0 0 12 12"><path d="M4.6 4V0.8H10.6V7H8.2" fill="none" stroke="#2a2a2a" stroke-width="1.3"/><rect x="4" y="0.2" width="7.2" height="2.2" fill="#2a2a2a"/><rect x="1.8" y="4.8" width="6" height="6" fill="none" stroke="#333" stroke-width="1.3"/><rect x="1.2" y="4.2" width="7.2" height="2.2" fill="#2a2a2a"/></svg>
<svg class="a" style="left:2540px;top:121px;" width="12" height="12" viewBox="0 0 12 12"><path d="M1.5 1.5L10.5 10.5M10.5 1.5L1.5 10.5" stroke="#333" stroke-width="1.8"/></svg>
<div class="a" style="left:1708px;top:139px;width:852px;height:12px;background:#f0f0f0"></div>
<svg class="a" style="left:1700px;top:136px;" width="340" height="15" viewBox="0 0 340 15"><path d="M19 15V10H29L33 15" fill="#eef" stroke="#9aa8e0" stroke-width="1"/><path d="M57 15L63 12L68 14L72 10L75 15" fill="none" stroke="#9ab0e0" stroke-width="1.2"/><path d="M97.5 10V15" stroke="#ccc"/><path d="M107 15V11H121V15" fill="none" stroke="#5a6ab0" stroke-width="1.2"/><rect x="110" y="13" width="4" height="2" fill="#3a4a90"/><path d="M133 15V11H147V15" fill="none" stroke="#5a6ab0" stroke-width="1.2"/><rect x="136" y="13" width="4" height="2" fill="#3a4a90"/><path d="M158 15V11H164L166 12H173V15Z" fill="#1a6aa8"/><path d="M186 15L192 11L198 15Z" fill="#1a5a80"/><path d="M208 10V15" stroke="#ccc"/><path d="M216 15V10H231L233 12V15" fill="none" stroke="#7a6a6a" stroke-width="1"/><path d="M222 15L224 13L226 15Z" fill="#c0c040"/><path d="M244 15L246 12L252 15Z" fill="#20a040"/><path d="M267 10V15" stroke="#ccc"/><path d="M275 15V10H294V15" fill="none" stroke="#777" stroke-width="1"/><rect x="277" y="13" width="15" height="2" fill="#ccc"/><path d="M301 15V10H320V15" fill="none" stroke="#999" stroke-width="1"/></svg>
<div class="a" style="left:2225px;top:173px;width:333px;height:31px;background:#f9f9f9;border-top:1px solid #e8e8e8"></div>
<div class="a" style="left:2523px;top:178px;width:18px;height:18px;background:#ef8a60;border:1px solid #d9452b;border-radius:3px"><svg class="a" style="left:2px;top:2px" width="12" height="12"><path d="M1 1L11 11M11 1L1 11" stroke="#fff" stroke-width="1.5"/></svg></div>
<div class="a" style="left:1710px;top:204px;width:848px;height:1142px;background:#f0f0f0;border:1px solid #a0a0a0;border-top-color:#9a9a9a"></div>
<div class="a" style="left:1767px;top:217px;width:779px;height:1117px;background:#fff"></div>
<div class="a" style="left:41px;top:1127px;width:24px;height:219px;background:#dadada;border:1px solid #bdbdbd"></div>
<svg class="a" style="left:47px;top:1135px;" width="12" height="12" viewBox="0 0 12 12"><path d="M1.5 1.5L10.5 10.5M10.5 1.5L1.5 10.5" stroke="#333" stroke-width="1.8"/></svg>
<svg class="a" style="left:47px;top:1162px;" width="12" height="12" viewBox="0 0 12 12"><path d="M4.6 4V0.8H10.6V7H8.2" fill="none" stroke="#2a2a2a" stroke-width="1.3"/><rect x="4" y="0.2" width="7.2" height="2.2" fill="#2a2a2a"/><rect x="1.8" y="4.8" width="6" height="6" fill="none" stroke="#333" stroke-width="1.3"/><rect x="1.2" y="4.2" width="7.2" height="2.2" fill="#2a2a2a"/></svg>
<div class="a sn" style="left:40px;top:1340px;width:220px;height:24px;transform-origin:0 0;transform:rotate(-90deg);font-size:16.5px;padding-left:4px;padding-top:3px">Script Prompt</div>
<div class="a" style="left:69px;top:1128px;width:987px;height:197px;background:#fff;border-left:1px solid #a0a0a0;border-top:1px solid #a0a0a0"></div>
<div class="a ss" style="left:75px;top:1134px;font-size:14px;letter-spacing:-0.6px">&gt; n=findmodes;</div>
<div class="a ss" style="left:75px;top:1151px;font-size:14px;letter-spacing:-0.6px">&gt; n=findmodes;</div>
<div class="a ss" style="left:75px;top:1168px;font-size:14px;letter-spacing:-0.6px">&gt;</div>
<div class="a" style="left:69px;top:1327px;width:290px;height:19px;background:#f0f0f0;border:1px solid #d6d6d6;border-bottom:none"></div>
<div class="a" style="left:359px;top:1327px;width:288px;height:19px;background:#f0f0f0;border:1px solid #d6d6d6;border-bottom:none"></div>
<div class="a" style="left:647px;top:1327px;width:296px;height:19px;background:#f0f0f0;border:1px solid #d6d6d6;border-bottom:none"></div>
<div class="a ss" style="left:73px;top:1330px;">Group scope= ::model</div>
<div class="a ss" style="left:363px;top:1330px;">Directory: C:\Users\chenz</div>
<div class="a ss" style="left:652px;top:1330px;">Normalization: CWNorm (first source)</div>
<div class="a" style="left:946px;top:1328px;width:16px;height:16px;background:#0067c0;border-radius:3px"><svg class="a" style="left:2px;top:3px" width="12" height="10"><path d="M1 5L4.5 8.5L11 1.5" fill="none" stroke="#fff" stroke-width="1.4"/></svg></div>
<div class="a ss" style="left:968px;top:1330px;">Safe-mode</div>
<div class="a" style="left:0px;top:1350px;width:2560px;height:1px;background:#a8a8a8"></div>
<div class="a" style="left:2px;top:1350px;width:1px;height:26px;background:#b8b8b8"></div>
<div class="a" style="left:2043px;top:1350px;width:1px;height:26px;background:#b8b8b8"></div>
<div class="a" style="left:2518px;top:1350px;width:1px;height:26px;background:#c8c8c8"></div>
<div class="a ss" style="left:2045px;top:1358px;font-size:14px;letter-spacing:-0.5px">x:</div>
<div class="a ss" style="left:2202px;top:1358px;font-size:14px;letter-spacing:-0.5px">y:</div>
<div class="a ss" style="left:2361px;top:1358px;font-size:14px;letter-spacing:-0.5px">z:</div>
<svg class="a" style="left:2524px;top:1358px;" width="8" height="12" viewBox="0 0 8 12"><path d="M6 1L1 6L6 11" fill="none" stroke="#444" stroke-width="1.2"/></svg>
<svg class="a" style="left:2545px;top:1358px;" width="8" height="12" viewBox="0 0 8 12"><path d="M2 1L7 6L2 11" fill="none" stroke="#444" stroke-width="1.2"/></svg>
<div class="a" style="left:1061px;top:150px;width:1165px;height:1144px;background:#f0f0f0;border:1px solid #a9a9a9;border-radius:7px 7px 4px 4px;box-shadow:0 9px 15px -3px rgba(0,0,0,0.20),0 2px 5px rgba(0,0,0,0.06)"></div>
<div class="a" style="left:1062px;top:151px;width:1163px;height:37px;background:#f3f3f3;border-radius:6px 6px 0 0"></div>
<div class="a sn" style="left:1070px;top:162px;font-size:15px;color:#9a9a9a;letter-spacing:-0.15px">Eigensolver Analysis</div>
<div class="a" style="left:2199px;top:159px;width:25px;height:25px;background:#dcdcdc"><svg class="a" style="left:9px;top:9px" width="8" height="7"><path d="M0.5 0.5L7.5 6.5M7.5 0.5L0.5 6.5" stroke="#f4f4f4" stroke-width="1"/></svg></div>
<div class="a" style="left:1062px;top:195px;width:879px;height:384px;border:1px solid #dcdcdc;border-left:none"></div>
<div class="a" style="left:1068px;top:190px;width:76px;height:12px;background:#f0f0f0"></div>
<div class="a ss" style="left:1073px;top:190px;">Mode list</div>
<div class="a" style="left:1073px;top:210px;width:856px;height:358px;background:#fff;border:1px solid #7f8796;border-right-color:#9aa0aa;border-bottom-color:#8a92a0"></div>
<div class="a" style="left:1074px;top:261px;width:817px;height:1px;background:#dadada"></div>
<div class="a" style="left:1151px;top:211px;width:1px;height:50px;background:#dadada"></div>
<div class="a" style="left:1233px;top:211px;width:1px;height:50px;background:#dadada"></div>
<div class="a" style="left:1339px;top:211px;width:1px;height:50px;background:#dadada"></div>
<div class="a" style="left:1419px;top:211px;width:1px;height:50px;background:#dadada"></div>
<div class="a" style="left:1484px;top:211px;width:1px;height:50px;background:#dadada"></div>
<div class="a" style="left:1617px;top:211px;width:1px;height:50px;background:#dadada"></div>
<div class="a" style="left:1770px;top:211px;width:1px;height:50px;background:#dadada"></div>
<div class="a" style="left:1890px;top:211px;width:1px;height:50px;background:#dadada"></div>
<div class="a sn" style="left:1074px;top:229px;width:77px;text-align:center;font-size:16px">mode #</div>
<div class="a sn" style="left:1152px;top:219px;width:81px;text-align:center;font-size:16px">effective</div>
<div class="a sn" style="left:1152px;top:239px;width:81px;text-align:center;font-size:16px">index</div>
<div class="a sn" style="left:1234px;top:219px;width:105px;text-align:center;font-size:16px">wavelength</div>
<div class="a sn" style="left:1234px;top:239px;width:105px;text-align:center;font-size:16px">(μm)</div>
<div class="a sn" style="left:1340px;top:219px;width:79px;text-align:center;font-size:16px">loss</div>
<div class="a sn" style="left:1340px;top:239px;width:79px;text-align:center;font-size:16px">(dB/cm)</div>
<div class="a sn" style="left:1420px;top:219px;width:64px;text-align:center;font-size:16px">group</div>
<div class="a sn" style="left:1420px;top:239px;width:64px;text-align:center;font-size:16px">index</div>
<div class="a sn" style="left:1485px;top:219px;width:132px;text-align:center;font-size:16px">TE polarization</div>
<div class="a sn" style="left:1485px;top:239px;width:132px;text-align:center;font-size:16px">fraction (Ey)</div>
<div class="a sn" style="left:1618px;top:219px;width:152px;text-align:center;font-size:16px">waveguide TE/TM</div>
<div class="a sn" style="left:1618px;top:239px;width:152px;text-align:center;font-size:16px">fraction (%)</div>
<div class="a sn" style="left:1771px;top:219px;width:119px;text-align:center;font-size:16px">effective area</div>
<div class="a sn" style="left:1771px;top:239px;width:119px;text-align:center;font-size:16px">(μm^2)</div>
<svg class="a" style="left:1108px;top:212px;" width="10" height="6" viewBox="0 0 10 6"><path d="M0.5 5.5L5 1L9.5 5.5" fill="none" stroke="#555" stroke-width="1"/></svg>
<div class="a" style="left:1947px;top:195px;width:278px;height:384px;border:1px solid #dcdcdc;border-right:none"></div>
<div class="a" style="left:1953px;top:190px;width:48px;height:12px;background:#f0f0f0"></div>
<div class="a ss" style="left:1959px;top:190px;font-family:'Liberation Serif';letter-spacing:-0.3px;font-size:15px">DECK</div>
<div class="a" style="left:1959px;top:210px;width:256px;height:360px;background:#fff;border:1px solid #7f8796"></div>
<div class="a" style="left:1062px;top:578px;width:1163px;height:1px;background:#dcdcdc"></div>
<div class="a" style="left:1622px;top:582px;width:40px;height:4px;background:repeating-linear-gradient(90deg,#a8a8a8 0 1px,transparent 1px 3px)"></div>
<div class="a" style="left:1061px;top:588px;width:1163px;height:669px;background:#f0f0f0;border:1px solid #a6a6a6"></div>
<div class="a" style="left:1062px;top:589px;width:1px;height:666px;background:#fff"></div>
<div class="a" style="left:1066px;top:615px;width:1137px;height:621px;background:#f9f9f9;border-left:1px solid #e6e6e6;border-top:1px solid #e6e6e6"></div>
<div class="a" style="left:1067px;top:593px;width:142px;height:23px;background:#f9f9f9;border:1px solid #e6e6e6;border-bottom:none"></div>
<div class="a" style="left:1209px;top:594px;width:172px;height:21px;background:#f0f0f0;border:1px solid #e3e3e3;border-bottom:1px solid #e3e3e3"></div>
<div class="a" style="left:1381px;top:594px;width:156px;height:21px;background:#f0f0f0;border:1px solid #e3e3e3;border-bottom:1px solid #e3e3e3"></div>
<div class="a ss" style="left:1081px;top:600px;">Modal analysis</div>
<div class="a ss" style="left:1222px;top:600px;">Frequency analysis</div>
<div class="a ss" style="left:1396px;top:600px;">Overlap analysis</div>
<div class="a" style="left:1079px;top:628px;width:476px;height:620px;border:1px solid #a0a0a0;border-bottom:none"></div>
<div class="a ss" style="left:1101px;top:644px;">options</div>
<div class="a" style="left:1164px;top:642px;width:369px;height:20px;background:#f5f5f5;border:1px solid #e6e6e6;border-radius:3px"></div>
<div class="a ss" style="left:1168px;top:646px;color:#a6a6a6">Set Calculation Parameters</div>
<svg class="a" style="left:1517px;top:648px;" width="12" height="8" viewBox="0 0 12 8"><path d="M1 1.5L6 6.5L11 1.5" fill="none" stroke="#b0b0b0" stroke-width="1.1"/></svg>
<div class="a ss" style="right:1291px;top:686px;">frequency (THz)</div>
<div class="a" style="left:1279px;top:681px;width:252px;height:23px;background:#fff;border:1px solid #e2e2e2;border-bottom:1px solid #848484;border-radius:3px"></div>
<div class="a ss" style="left:1282px;top:686px;">193.414</div>
<div class="a ss" style="right:1291px;top:714px;">wavelength (μm)</div>
<div class="a" style="left:1279px;top:711px;width:252px;height:24px;background:#fff;border:1px solid #e2e2e2;border-bottom:1px solid #848484;border-radius:3px"></div>
<div class="a ss" style="left:1282px;top:718px;">1.55</div>
<div class="a" style="left:1279px;top:744px;width:158px;height:25px;background:#fdfdfd;border:1px solid #d3d3d3;border-bottom-color:#c4c4c4;border-radius:4px"></div>
<div class="a ss" style="left:1279px;top:751px;width:158px;text-align:center;">Mesh structure</div>
<div class="a ss" style="right:1290px;top:782px;">number of trial modes</div>
<div class="a" style="left:1279px;top:778px;width:252px;height:23px;background:#fff;border:1px solid #e2e2e2;border-bottom:1px solid #848484;border-radius:3px"></div>
<div class="a ss" style="left:1282px;top:784px;">4</div>
<div class="a ss" style="right:1289px;top:812px;">search</div>
<div class="a" style="left:1278px;top:808px;width:253px;height:21px;background:#fff;border:1px solid #d6d6d6;border-radius:3px"></div>
<div class="a ss" style="left:1282px;top:812px;">near n</div>
<svg class="a" style="left:1515px;top:814px;" width="12" height="8" viewBox="0 0 12 8"><path d="M1 1.5L6 6.5L11 1.5" fill="none" stroke="#333" stroke-width="1.1"/></svg>
<div class="a" style="left:1278px;top:838px;width:16px;height:16px;background:#0067c0;border-radius:3px"><svg class="a" style="left:2px;top:3px" width="12" height="10"><path d="M1 5L4.5 8.5L11 1.5" fill="none" stroke="#fff" stroke-width="1.4"/></svg></div>
<div class="a ss" style="left:1299px;top:838px;">use max index</div>
<div class="a ss" style="left:1277px;top:868px;">n</div>
<div class="a" style="left:1293px;top:863px;width:238px;height:23px;background:#f0f0f0;border:1px solid #e8e8e8;border-radius:3px"></div>
<div class="a ss" style="left:1299px;top:868px;color:#a0a0a0">3.47638</div>
<div class="a" style="left:1103px;top:901px;width:428px;height:207px;border:1px solid #dcdcdc"></div>
<div class="a" style="left:1108px;top:893px;width:148px;height:18px;background:#f9f9f9"></div>
<div class="a" style="left:1111px;top:893px;width:16px;height:16px;background:#f7f7f7;border:1px solid #8a8a8a;border-radius:3px"></div>
<div class="a ss" style="left:1135px;top:894px;">bent waveguide</div>
<div class="a ss" style="right:1239px;top:924px;color:#8c8c8c">bend radius (μm)</div>
<div class="a" style="left:1330px;top:922px;width:189px;height:22px;background:#f0f0f0;border:1px solid #e8e8e8;border-radius:3px"></div>
<div class="a ss" style="right:1239px;top:958px;color:#8c8c8c">bend orientation (degrees)</div>
<div class="a" style="left:1330px;top:952px;width:189px;height:23px;background:#f0f0f0;border:1px solid #e8e8e8;border-radius:3px"></div>
<div class="a ss" style="right:1237px;top:986px;color:#8c8c8c">bend location</div>
<div class="a" style="left:1330px;top:984px;width:189px;height:19px;background:#f5f5f5;border:1px solid #e6e6e6;border-radius:3px"></div>
<div class="a ss" style="left:1334px;top:986px;color:#a6a6a6">simulation center</div>
<svg class="a" style="left:1503px;top:989px;" width="12" height="8" viewBox="0 0 12 8"><path d="M1 1.5L6 6.5L11 1.5" fill="none" stroke="#b0b0b0" stroke-width="1.1"/></svg>
<div class="a ss" style="right:1239px;top:1014px;color:#8c8c8c">bend location x (μm)</div>
<div class="a" style="left:1330px;top:1012px;width:189px;height:22px;background:#f0f0f0;border:1px solid #e8e8e8;border-radius:3px"></div>
<div class="a ss" style="left:1336px;top:1016px;color:#a0a0a0">0</div>
<div class="a ss" style="right:1239px;top:1044px;color:#8c8c8c">bend location y (μm)</div>
<div class="a" style="left:1330px;top:1042px;width:189px;height:22px;background:#f0f0f0;border:1px solid #e8e8e8;border-radius:3px"></div>
<div class="a ss" style="left:1336px;top:1046px;color:#a0a0a0">0</div>
<div class="a ss" style="right:1239px;top:1076px;color:#8c8c8c">bend location z (μm)</div>
<div class="a" style="left:1330px;top:1074px;width:189px;height:22px;background:#f0f0f0;border:1px solid #e8e8e8;border-radius:3px"></div>
<div class="a ss" style="left:1336px;top:1078px;color:#a0a0a0">0</div>
<div class="a" style="left:1103px;top:1124px;width:428px;height:30px;border:1px solid #dcdcdc"></div>
<div class="a" style="left:1108px;top:1116px;width:160px;height:18px;background:#f9f9f9"></div>
<div class="a" style="left:1111px;top:1116px;width:16px;height:16px;background:#f7f7f7;border:1px solid #8a8a8a;border-radius:3px"></div>
<div class="a ss" style="left:1135px;top:1116px;">helical waveguide</div>
<div class="a" style="left:1104px;top:1165px;width:175px;height:25px;background:#fdfdfd;border:1px solid #d3d3d3;border-bottom-color:#c4c4c4;border-radius:4px"></div>
<div class="a ss" style="left:1106px;top:1172px;color:#a0a0a0">Restore Last Settings</div>
<div class="a" style="left:1356px;top:1165px;width:174px;height:25px;background:#fdfdfd;border:1px solid #d3d3d3;border-bottom-color:#c4c4c4;border-radius:4px"></div>
<div class="a ss" style="left:1356px;top:1172px;width:174px;text-align:center;">Calculate Modes</div>
<div class="a" style="left:1563px;top:628px;width:640px;height:608px;border-left:1px solid #a0a0a0;border-top:1px solid #a0a0a0"></div>
<div class="a" style="left:1576px;top:641px;width:627px;height:504px;background:#fff;border-left:1px solid #a0a0a0;border-top:1px solid #a0a0a0;border-bottom:1px solid #a0a0a0"></div>
<div class="a" style="left:1576px;top:1160px;width:627px;height:76px;border-left:1px solid #dcdcdc;border-top:1px solid #dcdcdc"></div>
<div class="a" style="left:1582px;top:1152px;width:142px;height:16px;background:#f9f9f9"></div>
<div class="a ss" style="left:1587px;top:1154px;">Mode plot options</div>
<div class="a ss" style="left:1587px;top:1188px;">plot</div>
<div class="a" style="left:1627px;top:1183px;width:181px;height:21px;background:#f5f5f5;border:1px solid #e6e6e6;border-radius:3px"></div>
<div class="a ss" style="left:1631px;top:1188px;color:#a6a6a6">Material properties</div>
<svg class="a" style="left:1792px;top:1189px;" width="12" height="8" viewBox="0 0 12 8"><path d="M1 1.5L6 6.5L11 1.5" fill="none" stroke="#b0b0b0" stroke-width="1.1"/></svg>
<div class="a ss" style="right:658px;top:1188px;">component</div>
<div class="a" style="left:1910px;top:1183px;width:143px;height:21px;background:#fff;border:1px solid #d6d6d6;border-radius:3px"></div>
<div class="a ss" style="left:1914px;top:1188px;">index x</div>
<svg class="a" style="left:2037px;top:1189px;" width="12" height="8" viewBox="0 0 12 8"><path d="M1 1.5L6 6.5L11 1.5" fill="none" stroke="#333" stroke-width="1.1"/></svg>
<div class="a" style="left:1627px;top:1214px;width:181px;height:21px;background:#fff;border:1px solid #d6d6d6;border-radius:3px"></div>
<div class="a ss" style="left:1631px;top:1218px;">amplitude</div>
<svg class="a" style="left:1792px;top:1220px;" width="12" height="8" viewBox="0 0 12 8"><path d="M1 1.5L6 6.5L11 1.5" fill="none" stroke="#333" stroke-width="1.1"/></svg>
<div class="a ss" style="right:658px;top:1218px;">coordinates</div>
<div class="a" style="left:1910px;top:1214px;width:143px;height:21px;background:#fff;border:1px solid #d6d6d6;border-radius:3px"></div>
<div class="a ss" style="left:1914px;top:1218px;">cartesian</div>
<svg class="a" style="left:2037px;top:1220px;" width="12" height="8" viewBox="0 0 12 8"><path d="M1 1.5L6 6.5L11 1.5" fill="none" stroke="#333" stroke-width="1.1"/></svg>
<div class="a" style="left:2060px;top:1180px;width:143px;height:56px;border-left:1px solid #e0e0e0;border-top:1px solid #e0e0e0"></div>
<div class="a" style="left:2067px;top:1188px;width:16px;height:16px;background:#0067c0;border-radius:50%"><div class="a" style="left:5px;top:5px;width:6px;height:6px;background:#fff;border-radius:50%"></div></div>
<div class="a ss" style="left:2089px;top:1190px;">linear scale</div>
<div class="a" style="left:2067px;top:1214px;width:16px;height:16px;background:#f5f5f5;border:1px solid #8a8a8a;border-radius:50%"></div>
<div class="a ss" style="left:2089px;top:1216px;">log scale</div>
<div class="a" style="left:2203px;top:589px;width:20px;height:647px;background:#f0f0f0"></div>
<div class="a" style="left:2210px;top:611px;width:6px;height:535px;background:#858585"></div>
<div class="a" style="left:1063px;top:1236px;width:1160px;height:19px;background:#f0f0f0"></div>
<div class="a" style="left:1084px;top:1243px;width:1047px;height:6px;background:#858585"></div>
<div class="a" style="left:1062px;top:1266px;width:158px;height:26px;background:#fdfdfd;border:1px solid #d3d3d3;border-bottom-color:#c4c4c4;border-radius:4px"></div>
<div class="a ss" style="left:1065px;top:1274px;">Advanced options...</div>
<div class="a" style="left:2034px;top:1266px;width:90px;height:26px;background:#fdfdfd;border:1px solid #d3d3d3;border-bottom-color:#c4c4c4;border-radius:4px"></div>
<div class="a ss" style="left:2034px;top:1274px;width:90px;text-align:center;">Redock</div>
<div class="a" style="left:2133px;top:1266px;width:91px;height:26px;background:#fdfdfd;border:1px solid #d3d3d3;border-bottom-color:#c4c4c4;border-radius:4px"></div>
<div class="a ss" style="left:2133px;top:1274px;width:91px;text-align:center;">Hide</div>
</body></html>
